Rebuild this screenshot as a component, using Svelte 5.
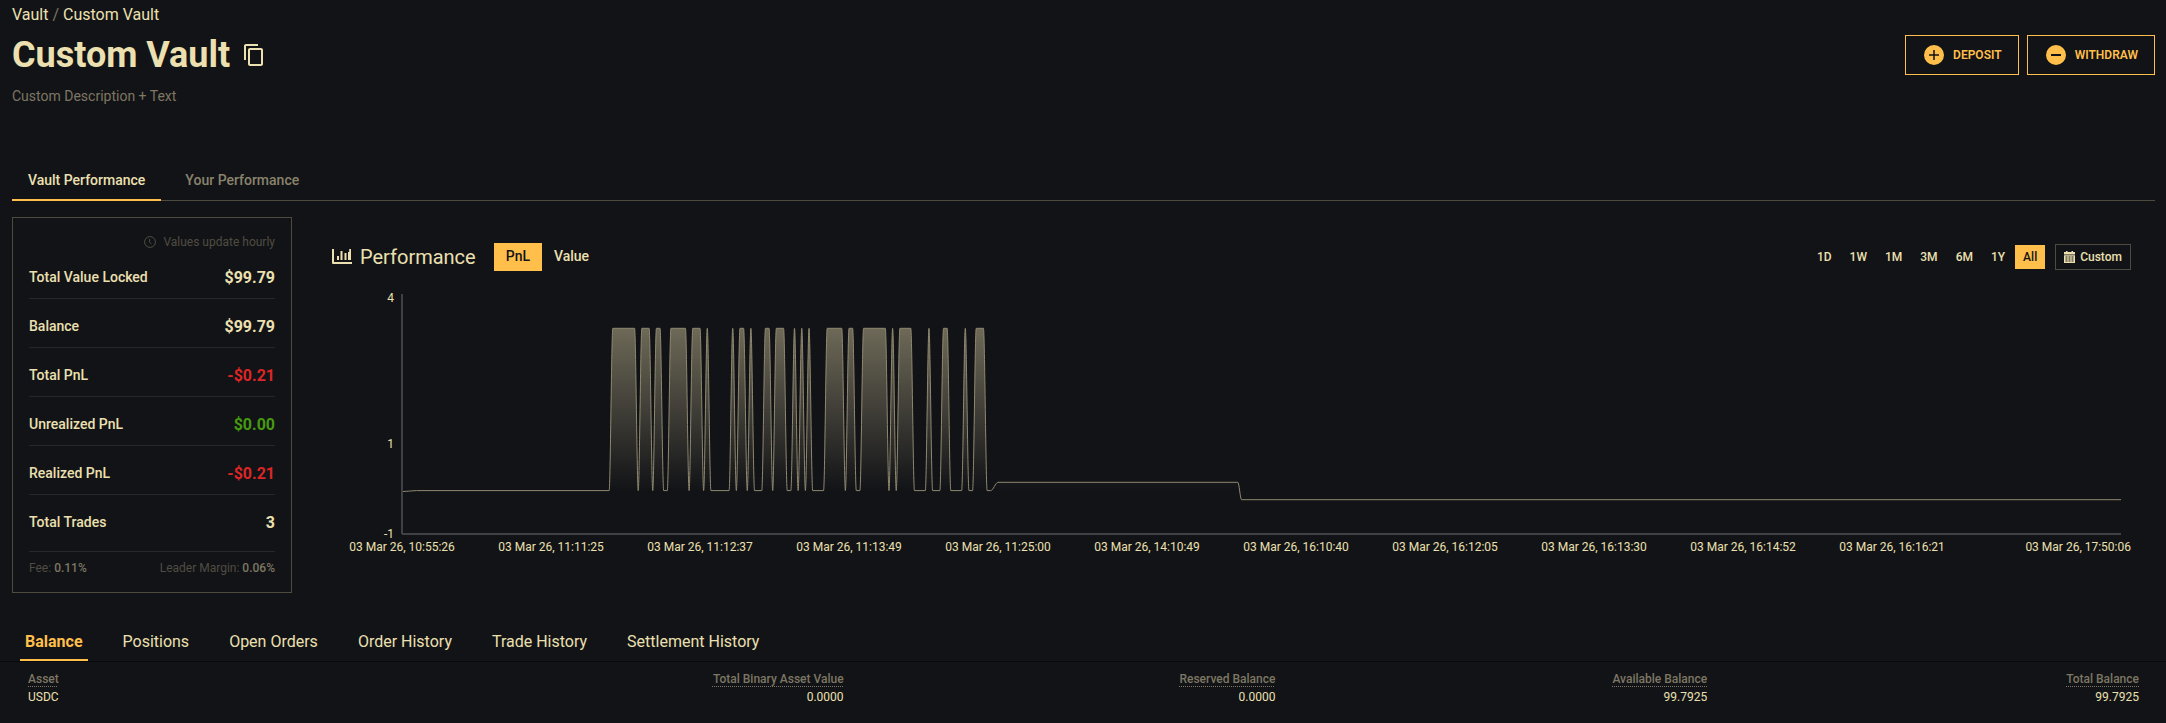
<script>
	const ranges = ['1D', '1W', '1M', '3M', '6M', '1Y', 'All'];
	let perfTab = 'vault';
	let metric = 'PnL';
	let range = 'All';
	let bookTab = 'Balance';

	const stats = [
		{ label: 'Total Value Locked', value: '$99.79' },
		{ label: 'Balance', value: '$99.79' },
		{ label: 'Total PnL', value: '-$0.21', tone: 'down' },
		{ label: 'Unrealized PnL', value: '$0.00', tone: 'up' },
		{ label: 'Realized PnL', value: '-$0.21', tone: 'down' },
		{ label: 'Total Trades', value: '3' }
	];

	const bookTabs = ['Balance', 'Positions', 'Open Orders', 'Order History', 'Trade History', 'Settlement History'];
	const columns = ['Asset', 'Total Binary Asset Value', 'Reserved Balance', 'Available Balance', 'Total Balance'];
	const balances = [['USDC', '0.0000', '0.0000', '99.7925', '99.7925']];

	// chart geometry: one unit of x per sample, y in pixels from the top of the plot
	const samples = 473;
	const plotHeight = 240;
	const high = 34.3;
	const zero = 196.6;

	// first and last sample of every stretch spent at the high value
	const peaks = [
		[58, 64], [66, 68], [70, 71], [74, 78], [80, 82], [84, 84], [91, 91], [93, 94], [96, 96],
		[100, 101], [103, 105], [108, 108], [110, 110], [112, 112], [117, 121], [123, 124],
		[127, 133], [135, 135], [137, 140], [145, 145], [149, 150], [155, 155], [158, 160]
	];

	const points = [
		[0, zero + 1], [4, zero],
		...peaks.flatMap(([a, b]) => [[a - 1, zero], [a, high], [b, high], [b + 1, zero]]),
		[162, zero], [164, 188.3], [230, 188.3], [231, 205.7], [samples, 205.7]
	];

	// every sample is a flat spot, so each segment eases in and out of it
	function smooth(pts) {
		return pts.slice(1).reduce((d, [x, y], i) => {
			const [px, py] = pts[i];
			const third = (x - px) / 3;
			return `${d}C${px + third} ${py} ${x - third} ${y} ${x} ${y}`;
		}, `M${pts[0].join(' ')}`);
	}

	const line = smooth(points);
	const area = `${line}V${zero}H0Z`;

	const yTicks = [
		{ text: '4', y: 8 },
		{ text: '1', y: 154 },
		{ text: '-1', y: 244 }
	];

	const xTicks = [
		'10:55:26', '11:11:25', '11:12:37', '11:13:49', '11:25:00', '14:10:49',
		'16:10:40', '16:12:05', '16:13:30', '16:14:52', '16:16:21'
	].map((time, i) => ({ text: `03 Mar 26, ${time}`, x: (i * 41 * 100) / samples }));
</script>

<main class="page">
	<div class="top">
		<nav class="crumbs">
			<a href="#vaults">Vault</a> <span>/</span> <a href="#vault">Custom Vault</a>
		</nav>

		<header class="head">
			<div class="title">
				<h1>Custom Vault</h1>
				<button class="copy" aria-label="Copy vault address">
					<svg viewBox="0 0 24 24" fill="currentColor">
						<path d="M16 1H4c-1.100 0-2 .9-2 2v14h2V3h12V1zm3 4H8c-1.100 0-2 .9-2 2v14c0 1.100.9 2 2 2h11c1.100 0 2-.9 2-2V7c0-1.100-.9-2-2-2zm0 16H8V7h11v14z" />
					</svg>
				</button>
			</div>
			<div class="actions">
				<button class="action">
					<svg viewBox="0 0 20 20">
						<circle cx="10" cy="10" r="10" fill="currentColor" />
						<path d="M10 5v10M5 10h10" class="sign" />
					</svg>
					DEPOSIT
				</button>
				<button class="action">
					<svg viewBox="0 0 20 20">
						<circle cx="10" cy="10" r="10" fill="currentColor" />
						<path d="M5 10h10" class="sign wide" />
					</svg>
					WITHDRAW
				</button>
			</div>
		</header>
		<p class="description">Custom Description + Text</p>

		<div class="tabs">
			<button class:active={perfTab === 'vault'} on:click={() => (perfTab = 'vault')}>Vault Performance</button>
			<button class:active={perfTab === 'yours'} on:click={() => (perfTab = 'yours')}>Your Performance</button>
		</div>

		<div class="overview">
			<section class="card">
				<div class="note">
					<svg viewBox="0 0 12 12" fill="none" stroke="currentColor">
						<circle cx="6" cy="6" r="5.400" />
						<path d="M5.600 3v3.200L7.500 8" />
					</svg>
					Values update hourly
				</div>
				{#each stats as stat}
					<div class="stat">
						<span>{stat.label}</span>
						<strong class={stat.tone}>{stat.value}</strong>
					</div>
				{/each}
				<div class="fees">
					<span>Fee: <b>0.11%</b></span>
					<span>Leader Margin: <b>0.06%</b></span>
				</div>
			</section>

			<section class="performance">
				<div class="toolbar">
					<svg class="chart-icon" viewBox="0 0 20 16" fill="currentColor">
						<path d="M0 0h2v13h18v2H1a1 1 0 0 1-1-1zM5 7h2v4H5zM8.500 2h2v9h-2zM12.500 4h2v7h-2zM16 3h1.200V0H19v11h-3z" />
					</svg>
					<h2>Performance</h2>
					<div class="metrics">
						{#each ['PnL', 'Value'] as name}
							<button class:active={metric === name} on:click={() => (metric = name)}>{name}</button>
						{/each}
					</div>
					<div class="ranges">
						{#each ranges as name}
							<button class:active={range === name} on:click={() => (range = name)}>{name}</button>
						{/each}
					</div>
					<button class="custom">
						<svg viewBox="0 0 11 12" fill="currentColor" fill-rule="evenodd">
							<path d="M2 0h1.500v1h4V0H9v1h2v2.500H0V1h2zM0 4.300h11V12H0zM1.500 5.500v1h2v-1zm3 0v1h2v-1zm3 0v1h2v-1zM1.500 7.500v1h2v-1zm3 0v1h2v-1zm3 0v1h2v-1zM1.500 9.500v1h2v-1zm3 0v1h2v-1zm3 0v1h2v-1z" />
						</svg>
						Custom
					</button>
				</div>

				<div class="chart">
					<svg class="plot" role="img" aria-label="PnL over time">
						<svg viewBox="0 0 {samples} {plotHeight}" preserveAspectRatio="none" width="100%" height={plotHeight}>
							<defs>
								<linearGradient id="fill" gradientUnits="userSpaceOnUse" x1="0" y1={high} x2="0" y2={zero}>
									<stop offset="0" stop-color="#ece0b0" stop-opacity="0.42" />
									<stop offset="1" stop-color="#ece0b0" stop-opacity="0" />
								</linearGradient>
							</defs>
							<path d={area} fill="url(#fill)" />
							<path d={line} class="line" />
						</svg>
						<line class="axis" x1="0" y1="0" x2="0" y2={plotHeight} />
						<line class="axis" x1="0" y1={plotHeight} x2="100%" y2={plotHeight} />
						{#each yTicks as tick}
							<text x="-8" y={tick.y} text-anchor="end">{tick.text}</text>
						{/each}
						{#each xTicks as tick}
							<text x="{tick.x}%" y="257" text-anchor="middle">{tick.text}</text>
						{/each}
						<text x="100%" dx="10" y="257" text-anchor="end">03 Mar 26, 17:50:06</text>
					</svg>
				</div>
			</section>
		</div>
	</div>

	<section class="book">
		<div class="book-tabs">
			{#each bookTabs as name}
				<button class:active={bookTab === name} on:click={() => (bookTab = name)}>{name}</button>
			{/each}
		</div>
		<div class="table-wrap">
			<table>
				<thead>
					<tr>
						{#each columns as column}
							<th><span>{column}</span></th>
						{/each}
					</tr>
				</thead>
				<tbody>
					{#each balances as row}
						<tr>
							{#each row as cell}
								<td>{cell}</td>
							{/each}
						</tr>
					{/each}
				</tbody>
			</table>
		</div>
	</section>
</main>

<style>
	:global(body) {
		background: #121317;
	}

	.page {
		color: #ece0b0;
		font-family: Roboto, "Liberation Sans", sans-serif;
		font-size: 14px;
		line-height: 20px;
	}

	button {
		margin: 0;
		padding: 0;
		border: 0;
		background: none;
		color: inherit;
		font: inherit;
		cursor: pointer;
	}

	svg {
		display: block;
		flex: none;
	}

	.top {
		padding: 5px 11px 0 12px;
	}

	.crumbs {
		font-size: 16px;
	}

	.crumbs a {
		color: inherit;
		text-decoration: none;
	}

	.crumbs span {
		color: #7d7763;
	}

	.head {
		display: flex;
		justify-content: space-between;
		align-items: center;
		margin-top: 9px;
	}

	.title {
		display: flex;
		align-items: center;
		gap: 12px;
	}

	h1 {
		margin: 0;
		font-size: 36px;
		line-height: 42px;
		font-weight: 700;
	}

	.copy svg {
		width: 24px;
		height: 24px;
	}

	.actions {
		display: flex;
		gap: 8px;
	}

	.action {
		display: flex;
		align-items: center;
		gap: 9px;
		height: 40px;
		padding: 0 16px 0 18px;
		border: 1px solid #ffbf4a;
		color: #ffbf4a;
		font-size: 12px;
		font-weight: 600;
	}

	.action svg {
		width: 20px;
		height: 20px;
	}

	.sign {
		stroke: #121317;
		stroke-width: 1.5;
	}

	.sign.wide {
		stroke-width: 2;
	}

	.description {
		margin: 10px 0 0;
		color: #7d7763;
	}

	.tabs {
		display: flex;
		gap: 8px;
		margin-top: 64px;
		box-shadow: inset 0 -1px #4d4b40;
	}

	.tabs button {
		padding: 0 16px 9px;
		height: 31px;
		border-bottom: 2px solid transparent;
		color: #8a836c;
		font-weight: 500;
	}

	.tabs button.active {
		border-color: #ffbf4a;
		color: #ece0b0;
	}

	.overview {
		display: flex;
		align-items: flex-start;
		gap: 40px;
		margin-top: 16px;
	}

	.card {
		display: flex;
		flex: none;
		flex-direction: column;
		gap: 16px;
		box-sizing: border-box;
		width: 280px;
		padding: 16px;
		border: 1px solid #4d4b40;
	}

	.note {
		display: flex;
		align-items: center;
		justify-content: flex-end;
		gap: 7px;
		color: #4f4d41;
		font-size: 12px;
		line-height: 16px;
	}

	.note svg {
		width: 12px;
		height: 12px;
	}

	.stat {
		display: flex;
		justify-content: space-between;
		padding-bottom: 8px;
		border-bottom: 1px solid #26272a;
		font-weight: 500;
		line-height: 22px;
	}

	.stat:nth-last-child(2) {
		padding-bottom: 0;
		border-bottom: 0;
	}

	.stat strong {
		font-size: 16px;
		font-weight: 700;
		line-height: 24px;
	}

	.down {
		color: #dc2626;
	}

	.up {
		color: #459a0f;
	}

	.fees {
		display: flex;
		justify-content: space-between;
		padding-top: 8px;
		border-top: 1px solid #26272a;
		color: #4f4d41;
		font-size: 12px;
		line-height: 16px;
	}

	.fees b {
		color: #7d7763;
		font-weight: 500;
	}

	.performance {
		flex: 1;
		min-width: 0;
		padding: 26px 24px 0 0;
	}

	.toolbar {
		display: flex;
		align-items: center;
		height: 28px;
	}

	.chart-icon {
		width: 20px;
		height: 16px;
	}

	h2 {
		margin: 0 18px 0 8px;
		font-size: 20px;
		font-weight: 400;
		line-height: 28px;
	}

	.metrics,
	.ranges {
		display: flex;
		font-weight: 500;
	}

	.metrics button {
		height: 28px;
		padding: 0 12px 2px;
	}

	.ranges {
		gap: 2px;
		margin: 0 10px 0 auto;
		font-size: 12px;
	}

	.ranges button {
		height: 24px;
		padding: 0 8px;
	}

	.metrics .active,
	.ranges .active {
		background: #ffbf4a;
		color: #121317;
	}

	.custom {
		display: flex;
		align-items: center;
		gap: 5px;
		height: 26px;
		padding: 0 8px;
		border: 1px solid #4d4b40;
		font-size: 12px;
		font-weight: 500;
	}

	.custom svg {
		width: 11px;
		height: 12px;
	}

	.chart {
		padding: 23px 10px 0 70px;
	}

	.plot {
		width: 100%;
		height: 299px;
		overflow: visible;
	}

	.plot text {
		fill: #ece0b0;
		font-size: 12px;
	}

	.line {
		fill: none;
		stroke: #8f886f;
		stroke-width: 1;
		vector-effect: non-scaling-stroke;
	}

	.axis {
		stroke: #404145;
		stroke-width: 2;
	}

	.book-tabs {
		display: flex;
		gap: 30px;
		margin-top: 36px;
		padding: 0 20px;
		border-bottom: 1px solid #08090b;
		font-size: 16px;
	}

	.book-tabs button {
		height: 32px;
		padding: 0 5px 4px;
		border-bottom: 2px solid transparent;
	}

	.book-tabs .active {
		border-color: #ffbf4a;
		color: #ffbf4a;
		font-weight: 700;
	}

	.table-wrap {
		padding: 8px 3px 16px 4px;
	}

	table {
		width: 100%;
		border-collapse: collapse;
		table-layout: fixed;
		font-size: 12px;
		line-height: 18px;
	}

	th,
	td {
		padding: 0 24px;
		text-align: right;
		font-weight: 400;
	}

	th:first-child,
	td:first-child {
		text-align: left;
	}

	th {
		color: #7d7763;
		font-weight: 500;
	}

	th span {
		text-decoration: underline dotted 1px;
		text-underline-offset: 3px;
	}
</style>
